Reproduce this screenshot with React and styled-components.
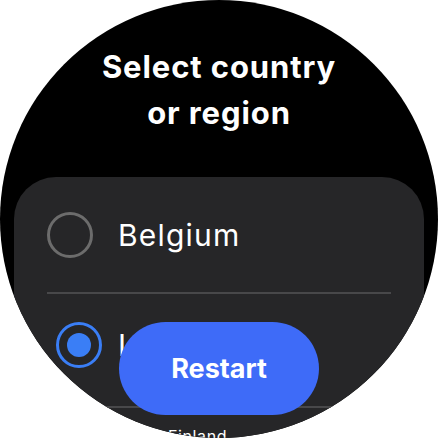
import React from 'react'
import styled, { createGlobalStyle } from 'styled-components'

const GlobalStyle = createGlobalStyle`
	html, body {
		margin: 0;
		padding: 0;
		background: #ffffff;
	}
	* {
		box-sizing: border-box;
	}
`

const Screen = styled.div`
	width: 438px;
	height: 438px;
	border-radius: 50%;
	background: #000000;
	overflow: hidden;
	position: relative;
	display: flex;
	flex-direction: column;
	align-items: center;
	font-family: Inter, Roboto, 'Noto Sans', sans-serif;
`

const Title = styled.h1`
	margin: 0;
	padding-top: 44px;
	color: #ffffff;
	font-size: 31px;
	font-weight: 700;
	line-height: 46px;
	text-align: center;
	letter-spacing: 0.9px;
`

const Card = styled.div`
	width: 410px;
	margin-top: 41px;
	flex: none;
	height: 300px;
	background: #262628;
	border-radius: 42px 42px 0 0;
	display: flex;
	flex-direction: column;
`

const Row = styled.div`
	display: flex;
	align-items: center;
	height: ${props => props.h}px;
	padding-left: ${props => props.indent}px;
	padding-bottom: ${props => props.lift || 0}px;
	gap: ${props => props.gap}px;
`

const Radio = styled.span`
	flex: none;
	width: 46px;
	height: 46px;
	border-radius: 50%;
	border: 3px solid ${props => (props.checked ? '#3a7ef6' : '#6c6c6c')};
	display: flex;
	align-items: center;
	justify-content: center;
	&:after {
		content: '';
		display: ${props => (props.checked ? 'block' : 'none')};
		width: 24px;
		height: 24px;
		border-radius: 50%;
		background: #3a7ef6;
	}
`

const Label = styled.span`
	color: #ffffff;
	font-size: 30px;
	font-weight: 400;
	letter-spacing: 1.2px;
`

const Divider = styled.div`
	flex: none;
	height: 2px;
	margin: 0 33px;
	background: #48484a;
`

const SmallRow = styled.div`
	padding-left: 154px;
	padding-top: 18px;
	color: #ffffff;
	font-size: 16px;
	letter-spacing: 0.6px;
`

const RestartButton = styled.button`
	position: absolute;
	left: 119px;
	top: 322px;
	width: 200px;
	height: 93px;
	border: none;
	border-radius: 47px;
	background: #3e6bf8;
	color: #ffffff;
	font-family: Inter, Roboto, 'Noto Sans', sans-serif;
	font-size: 27px;
	font-weight: 700;
	padding: 0;
	cursor: pointer;
`

export default function App() {
	return (
		<>
			<GlobalStyle />
			<Screen>
				<Title>
					Select country
					<br />
					or region
				</Title>
				<Card>
					<Row h={115} indent={33} gap={25}>
						<Radio />
						<Label>Belgium</Label>
					</Row>
					<Divider />
					<Row h={112} indent={42} gap={16} lift={10}>
						<Radio checked />
						<Label>Luxembourg</Label>
					</Row>
					<Divider />
					<SmallRow>Finland</SmallRow>
				</Card>
				<RestartButton>Restart</RestartButton>
			</Screen>
		</>
	)
}
